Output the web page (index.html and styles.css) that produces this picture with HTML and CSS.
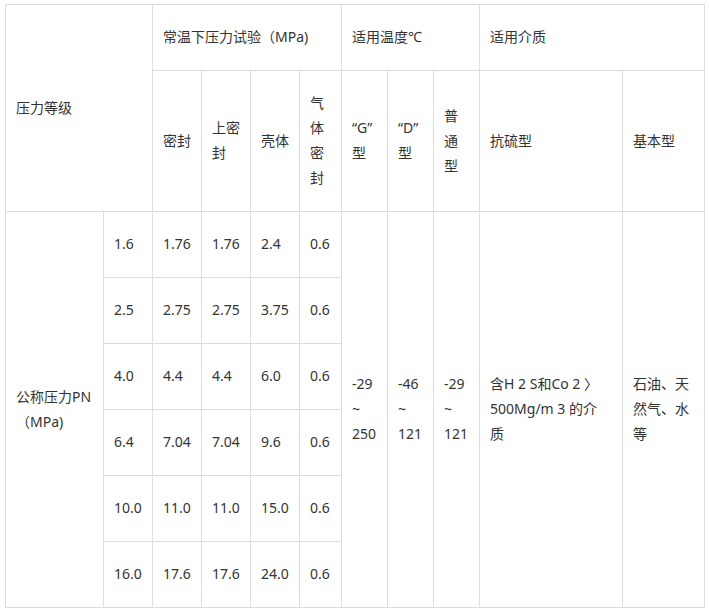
FILE: index.html
```html
<!DOCTYPE html>
<html lang="zh-CN">
<head>
<meta charset="utf-8">
<title>压力等级</title>
<link rel="stylesheet" href="styles.css">
</head>
<body>
<table class="spec">
  <colgroup>
    <col class="c1"><col class="c2"><col class="c3"><col class="c3"><col class="c3"><col class="c6">
    <col class="c7"><col class="c7"><col class="c7"><col class="c10"><col class="c11">
  </colgroup>
  <tr>
    <td colspan="2" rowspan="2">压力等级</td>
    <td colspan="4">常温下压力试验（MPa)</td>
    <td colspan="3">适用温度℃</td>
    <td colspan="2">适用介质</td>
  </tr>
  <tr>
    <td>密封</td>
    <td>上密封</td>
    <td>壳体</td>
    <td>气体密封</td>
    <td>“G”型</td>
    <td>“D”型</td>
    <td>普通型</td>
    <td>抗硫型</td>
    <td>基本型</td>
  </tr>
  <tr>
    <td rowspan="6">公称压力PN（MPa)</td>
    <td>1.6</td><td>1.76</td><td>1.76</td><td>2.4</td><td>0.6</td>
    <td rowspan="6">-29 ~ 250</td>
    <td rowspan="6">-46 ~ 121</td>
    <td rowspan="6">-29 ~ 121</td>
    <td rowspan="6" class="medium">含H 2 S和Co 2 〉500Mg/m 3 的介质</td>
    <td rowspan="6">石油、天然气、水等</td>
  </tr>
  <tr><td>2.5</td><td>2.75</td><td>2.75</td><td>3.75</td><td>0.6</td></tr>
  <tr><td>4.0</td><td>4.4</td><td>4.4</td><td>6.0</td><td>0.6</td></tr>
  <tr><td>6.4</td><td>7.04</td><td>7.04</td><td>9.6</td><td>0.6</td></tr>
  <tr><td>10.0</td><td>11.0</td><td>11.0</td><td>15.0</td><td>0.6</td></tr>
  <tr><td>16.0</td><td>17.6</td><td>17.6</td><td>24.0</td><td>0.6</td></tr>
</table>
</body>
</html>
```
FILE: styles.css
```css
html, body {
  margin: 0;
  padding: 0;
  background: #fff;
}
body {
  padding: 4px 0 0 5px;
  font-family: "Noto Sans", "Noto Sans CJK SC", sans-serif;
  font-size: 14px;
  color: #333;
}
.spec {
  border-collapse: collapse;
  table-layout: fixed;
  width: 700px;
}
.spec td {
  border: 1px solid #dcdcdc;
  padding: 19px 10px 21px;
  line-height: 25px;
  vertical-align: middle;
  text-align: left;
  word-wrap: break-word;
}
.spec td.medium {
  padding-right: 20px;
}
.c1 { width: 98px; }
.c2 { width: 49px; }
.c3 { width: 49px; }
.c6 { width: 42px; }
.c7 { width: 46px; }
.c10 { width: 143px; }
.c11 { width: 82px; }
```
